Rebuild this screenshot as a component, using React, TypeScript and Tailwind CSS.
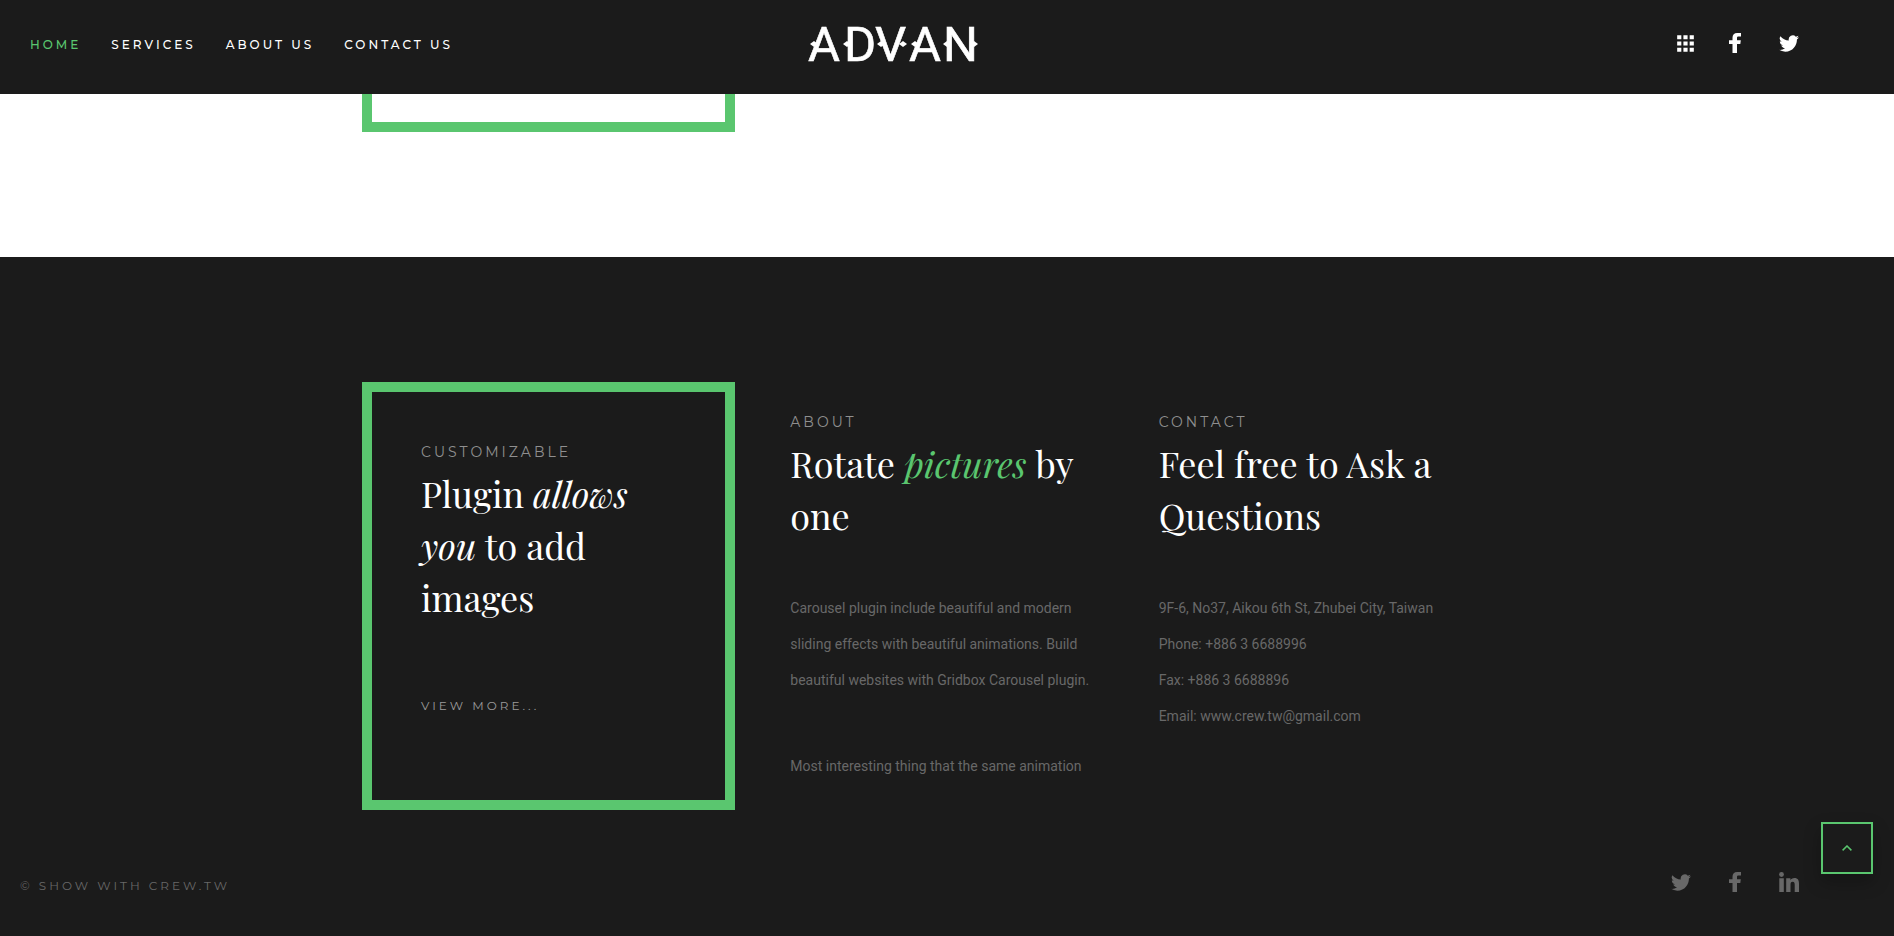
import type { ReactNode } from 'react';
import { MdApps } from 'react-icons/md';

const navItems = ['Home', 'Services', 'About us', 'Contact us'];
const spurs = [9, 42, 76, 98, 110, 142, 169];

function Logo() {
  return (
    <svg width="180" height="60" viewBox="0 -6 180 60" role="img" aria-label="ADVAN" className="overflow-visible text-white">
      <text
        x="3 39 70 104 138"
        y="41"
        fontFamily="Roboto, sans-serif"
        fontWeight="400"
        fontSize="49"
        fill="currentColor"
        stroke="currentColor"
        strokeWidth="0.6"
      >
        ADVAN
      </text>
      {spurs.map((x) => (
        <path key={x} d={`M${x - 4} 24l4-3 4 3-4 3z`} fill="currentColor" />
      ))}
    </svg>
  );
}

function TwitterIcon() {
  return (
    <svg width="20" height="17" viewBox="0 0 24 20" fill="currentColor" aria-hidden="true">
      <path d="M24 2.6a10 10 0 0 1-2.8.8A5 5 0 0 0 23.3.7a10 10 0 0 1-3.1 1.2 4.9 4.9 0 0 0-8.4 4.5A14 14 0 0 1 1.7 1.2a4.9 4.9 0 0 0 1.5 6.6 4.9 4.9 0 0 1-2.2-.6v.1a4.9 4.9 0 0 0 3.9 4.8 5 5 0 0 1-2.2.1 4.9 4.9 0 0 0 4.6 3.4A9.9 9.9 0 0 1 0 17.6 14 14 0 0 0 7.5 19.8c9.1 0 14-7.5 14-14v-.6A10 10 0 0 0 24 2.6z" />
    </svg>
  );
}

function FacebookIcon() {
  return (
    <svg width="12" height="20" viewBox="0 0 12 20" fill="currentColor" aria-hidden="true">
      <path d="M3.5 20V11H0V7.3h3.5V4.8C3.5 1.8 5.2 0 8.200 0H12v3.500H9.500C8.300 3.500 8 4 8 5v2.300h3.800L11.300 11H8v9z" />
    </svg>
  );
}

function LinkedinIcon() {
  return (
    <svg width="20" height="20" viewBox="0 0 20 20" fill="currentColor" aria-hidden="true">
      <circle cx="2.500" cy="2.500" r="2.400" />
      <path d="M.3 6.300h4.500V20H.3zM7.200 6.300h4.200v1.900C12 7 13.400 6 15.400 6 19 6 20 8.300 20 11.800V20h-4.300v-7.200c0-1.700-.2-3.100-2-3.100s-2.200 1.300-2.200 3V20H7.200z" />
    </svg>
  );
}

function Label({ children }: { children: ReactNode }) {
  return <p className="text-sm leading-6 tracking-[3px] text-[#8f8f8f] uppercase">{children}</p>;
}

function Heading({ children }: { children: ReactNode }) {
  return (
    <h2 className="mt-[3px] font-['Playfair_Display','Liberation_Serif',serif] text-4xl leading-[52px] text-white">
      {children}
    </h2>
  );
}

export default function App() {
  return (
    <div className="min-h-screen bg-[#1b1b1b] font-['Montserrat','Inter',sans-serif]">
      <header className="flex h-[94px] items-start bg-[#1b1b1b]">
        <nav className="flex w-[42.5%] gap-[30px] pt-[33px] pl-[30px]">
          {navItems.map((item, i) => (
            <a
              key={item}
              href="#"
              className={
                i === 0
                  ? 'text-xs leading-6 font-medium tracking-[3px] text-[#5ac66f] uppercase'
                  : 'text-xs leading-6 font-medium tracking-[3px] text-white uppercase'
              }
            >
              {item}
            </a>
          ))}
        </nav>
        <a href="#" className="mt-[14px]">
          <Logo />
        </a>
        <div className="mt-[31px] mr-[95px] ml-auto flex h-6 items-center text-white">
          <button type="button" aria-label="Apps" className="mr-[31px]">
            <MdApps size={25} />
          </button>
          <a href="#" aria-label="Facebook" className="mr-[38px]">
            <FacebookIcon />
          </a>
          <a href="#" aria-label="Twitter">
            <TwitterIcon />
          </a>
        </div>
      </header>

      <section className="bg-white pb-[125px]">
        <div className="mx-auto grid max-w-[1170px] grid-cols-3 gap-[25px]">
          <div className="h-[38px] border-[10px] border-t-0 border-[#5ac66f]" />
        </div>
      </section>

      <section className="pt-[125px]">
        <div className="mx-auto grid max-w-[1170px] grid-cols-3 gap-[25px]">
          <div className="border-[10px] border-[#5ac66f] px-[49px] pt-12 pb-[82px]">
            <Label>Customizable</Label>
            <Heading>
              Plugin <em>allows</em>
              <br />
              <em>you</em> to add
              <br />
              images
            </Heading>
            <a
              href="#"
              className="mt-[71px] block text-xs leading-6 tracking-[3px] text-[#9b9b9b] uppercase"
            >
              View more...
            </a>
          </div>
          <div className="pt-7 pl-[30px]">
            <Label>About</Label>
            <Heading>
              Rotate <em className="text-[#5ac66f]">pictures</em> by
              <br />
              one
            </Heading>
            <div className="mt-[49px] pr-10 font-['Roboto',sans-serif] text-sm leading-9 text-[#686868]">
              <p>Carousel plugin include beautiful and modern sliding effects with beautiful animations. Build beautiful websites with Gridbox Carousel plugin.</p>
              <p className="mt-[50px]">Most interesting thing that the same animation</p>
            </div>
          </div>
          <div className="pt-7">
            <Label>Contact</Label>
            <Heading>
              Feel free to Ask a
              <br />
              Questions
            </Heading>
            <address className="mt-[49px] font-['Roboto',sans-serif] text-sm leading-9 text-[#686868] not-italic">
              <p>9F-6, No37, Aikou 6th St, Zhubei City, Taiwan</p>
              <p>Phone: +886 3 6688996</p>
              <p>Fax: +886 3 6688896</p>
              <p>Email: www.crew.tw@gmail.com</p>
            </address>
          </div>
        </div>
      </section>

      <footer className="flex items-start justify-between pt-[60px] pr-[95px] pl-5 text-[#686868]">
        <p className="mt-1 text-xs leading-6 tracking-[3px] uppercase">© Show with crew.tw</p>
        <div className="flex h-6 items-center gap-[38px]">
          <a href="#" aria-label="Twitter">
            <TwitterIcon />
          </a>
          <a href="#" aria-label="Facebook">
            <FacebookIcon />
          </a>
          <a href="#" aria-label="LinkedIn">
            <LinkedinIcon />
          </a>
        </div>
      </footer>

      <button
        type="button"
        aria-label="Back to top"
        className="fixed right-[21px] bottom-[62px] flex size-[52px] items-center justify-center border-2 border-[#5ac66f] bg-[#1b1b1b] text-[#5ac66f] shadow-[0_8px_16px_rgba(0,0,0,0.25)]"
      >
        <svg width="10" height="6" viewBox="0 0 10 6" fill="none" stroke="currentColor" strokeWidth="1.5" aria-hidden="true">
          <path d="M.6 5.400L5 1l4.400 4.400" />
        </svg>
      </button>
    </div>
  );
}
